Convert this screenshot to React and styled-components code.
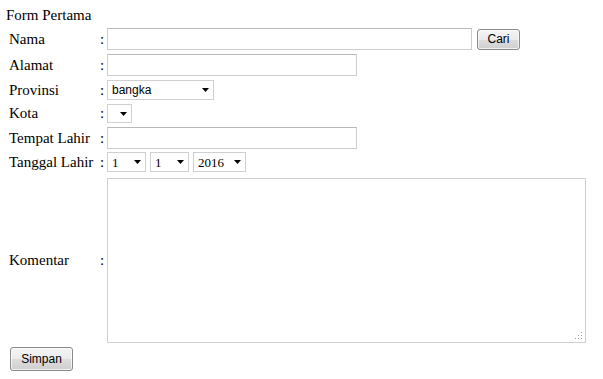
import React from 'react';
import styled, { createGlobalStyle } from 'styled-components';

const GlobalStyle = createGlobalStyle`
  html, body {
    margin: 0;
    padding: 0;
    background: #ffffff;
  }
  body {
    font-family: 'Liberation Serif', 'Times New Roman', serif;
    font-size: 15px;
    color: #000;
  }
`;

const App = () => {
  return (
    <>
      <GlobalStyle />
      <StylePage>
        <StyleTitle>Form Pertama</StyleTitle>
        <StyleForm>
          <StyleRow $pad='2px 0'>
            <StyleLabel>Nama</StyleLabel>
            <StyleColon>:</StyleColon>
            <StyleField>
              <StyleInput type='text' $width={365} />
              <StyleButton type='button' $width={43} $height={21}>
                Cari
              </StyleButton>
            </StyleField>
          </StyleRow>

          <StyleRow $pad='2px 0'>
            <StyleLabel>Alamat</StyleLabel>
            <StyleColon>:</StyleColon>
            <StyleField>
              <StyleInput type='text' $width={250} />
            </StyleField>
          </StyleRow>

          <StyleRow $pad='2px 0'>
            <StyleLabel>Provinsi</StyleLabel>
            <StyleColon>:</StyleColon>
            <StyleField>
              <Select width={107} sans options={['bangka']} />
            </StyleField>
          </StyleRow>

          <StyleRow $pad='2px 0'>
            <StyleLabel>Kota</StyleLabel>
            <StyleColon>:</StyleColon>
            <StyleField>
              <Select width={25} height={19} options={['']} />
            </StyleField>
          </StyleRow>

          <StyleRow $pad='2px 0'>
            <StyleLabel>Tempat Lahir</StyleLabel>
            <StyleColon>:</StyleColon>
            <StyleField>
              <StyleInput type='text' $width={250} />
            </StyleField>
          </StyleRow>

          <StyleRow $pad='1px 0 2px'>
            <StyleLabel>Tanggal Lahir</StyleLabel>
            <StyleColon>:</StyleColon>
            <StyleField $gap={4}>
              <Select width={39} options={['1']} />
              <Select width={39} options={['1']} />
              <Select width={53} options={['2016']} />
            </StyleField>
          </StyleRow>

          <StyleRow $pad='4px 0 2px'>
            <StyleLabel>Komentar</StyleLabel>
            <StyleColon>:</StyleColon>
            <StyleField>
              <StyleTextAreaWrapper>
                <StyleTextArea />
                <StyleGrip width='8' height='8' viewBox='0 0 8 8'>
                  <rect x='6' y='0' width='1' height='1' fill='#a0a0a0' />
                  <rect x='3' y='3' width='1' height='1' fill='#a0a0a0' />
                  <rect x='6' y='3' width='1' height='1' fill='#a0a0a0' />
                  <rect x='0' y='6' width='1' height='1' fill='#a0a0a0' />
                  <rect x='3' y='6' width='1' height='1' fill='#a0a0a0' />
                  <rect x='6' y='6' width='1' height='1' fill='#a0a0a0' />
                </StyleGrip>
              </StyleTextAreaWrapper>
            </StyleField>
          </StyleRow>
        </StyleForm>
        <StyleFooter>
          <StyleButton type='submit' $width={63} $height={24}>
            Simpan
          </StyleButton>
        </StyleFooter>
      </StylePage>
    </>
  );
};

const Select = ({ width, height = 20, options, sans }) => {
  return (
    <StyleSelectWrapper $width={width} $height={height}>
      <StyleSelect $sans={sans} defaultValue={options[0]}>
        {options.map((item) => (
          <option key={item} value={item}>
            {item}
          </option>
        ))}
      </StyleSelect>
      <StyleArrow width='7' height='4' viewBox='0 0 7 4'>
        <path d='M0 0H7L3.5 4Z' fill='#000' />
      </StyleArrow>
    </StyleSelectWrapper>
  );
};

export default App;

const StylePage = styled.main`
  width: 603px;
  height: 379px;
  box-sizing: border-box;
`;

const StyleTitle = styled.h1`
  margin: 0;
  padding: 7px 0 0 6px;
  height: 26px;
  box-sizing: border-box;
  font-size: 15px;
  font-weight: normal;
  line-height: 17px;
`;

const StyleForm = styled.div`
  display: flex;
  flex-direction: column;
`;

const StyleRow = styled.div`
  display: grid;
  grid-template-columns: 91px 7px auto;
  align-items: center;
  padding: ${(props) => props.$pad};
  padding-left: 9px;
`;

const StyleLabel = styled.span`
  font-size: 15px;
  line-height: 17px;
  white-space: nowrap;
`;

const StyleColon = styled.span`
  font-size: 15px;
  line-height: 17px;
`;

const StyleField = styled.div`
  display: flex;
  align-items: center;
  gap: ${(props) => props.$gap || 5}px;
`;

const StyleInput = styled.input`
  width: ${(props) => props.$width}px;
  height: 22px;
  box-sizing: border-box;
  margin: 0;
  padding: 1px 3px;
  border: 1px solid #cdcdcd;
  border-top-color: #b9b9b9;
  background: #fff;
  font-family: 'Liberation Sans', Arial, sans-serif;
  font-size: 12px;
  outline: none;
`;

const StyleButton = styled.button`
  width: ${(props) => props.$width}px;
  height: ${(props) => props.$height}px;
  box-sizing: border-box;
  margin: 0;
  padding: 0;
  border: 1px solid #8a8a8a;
  border-radius: 3px;
  background: linear-gradient(#f4f4f4 0%, #ebebeb 50%, #dddddd 51%, #cfcfcf 100%);
  box-shadow: inset 0 0 0 1px rgba(255, 255, 255, 0.7);
  font-family: 'Liberation Sans', Arial, sans-serif;
  font-size: 12px;
  color: #000;
`;

const StyleSelectWrapper = styled.div`
  position: relative;
  width: ${(props) => props.$width}px;
  height: ${(props) => props.$height}px;
`;

const StyleSelect = styled.select`
  appearance: none;
  -webkit-appearance: none;
  width: 100%;
  height: 100%;
  box-sizing: border-box;
  margin: 0;
  padding: 0 14px 0 4px;
  border: 1px solid #d0d0d0;
  border-radius: 0;
  background: #fff;
  font-family: ${(props) =>
    props.$sans ? "'Liberation Sans', Arial, sans-serif" : "'Liberation Serif', 'Times New Roman', serif"};
  font-size: ${(props) => (props.$sans ? 12 : 13)}px;
  color: #000;
  outline: none;
`;

const StyleArrow = styled.svg`
  position: absolute;
  right: 5px;
  top: 50%;
  margin-top: -2px;
  pointer-events: none;
`;

const StyleTextAreaWrapper = styled.div`
  position: relative;
  display: flex;
`;

const StyleTextArea = styled.textarea`
  width: 479px;
  height: 165px;
  box-sizing: border-box;
  margin: 0;
  border: 1px solid #d0d0d0;
  background: #fff;
  resize: none;
  outline: none;
`;

const StyleGrip = styled.svg`
  position: absolute;
  right: 3px;
  bottom: 3px;
  pointer-events: none;
`;

const StyleFooter = styled.div`
  padding: 2px 0 0 10px;
`;
